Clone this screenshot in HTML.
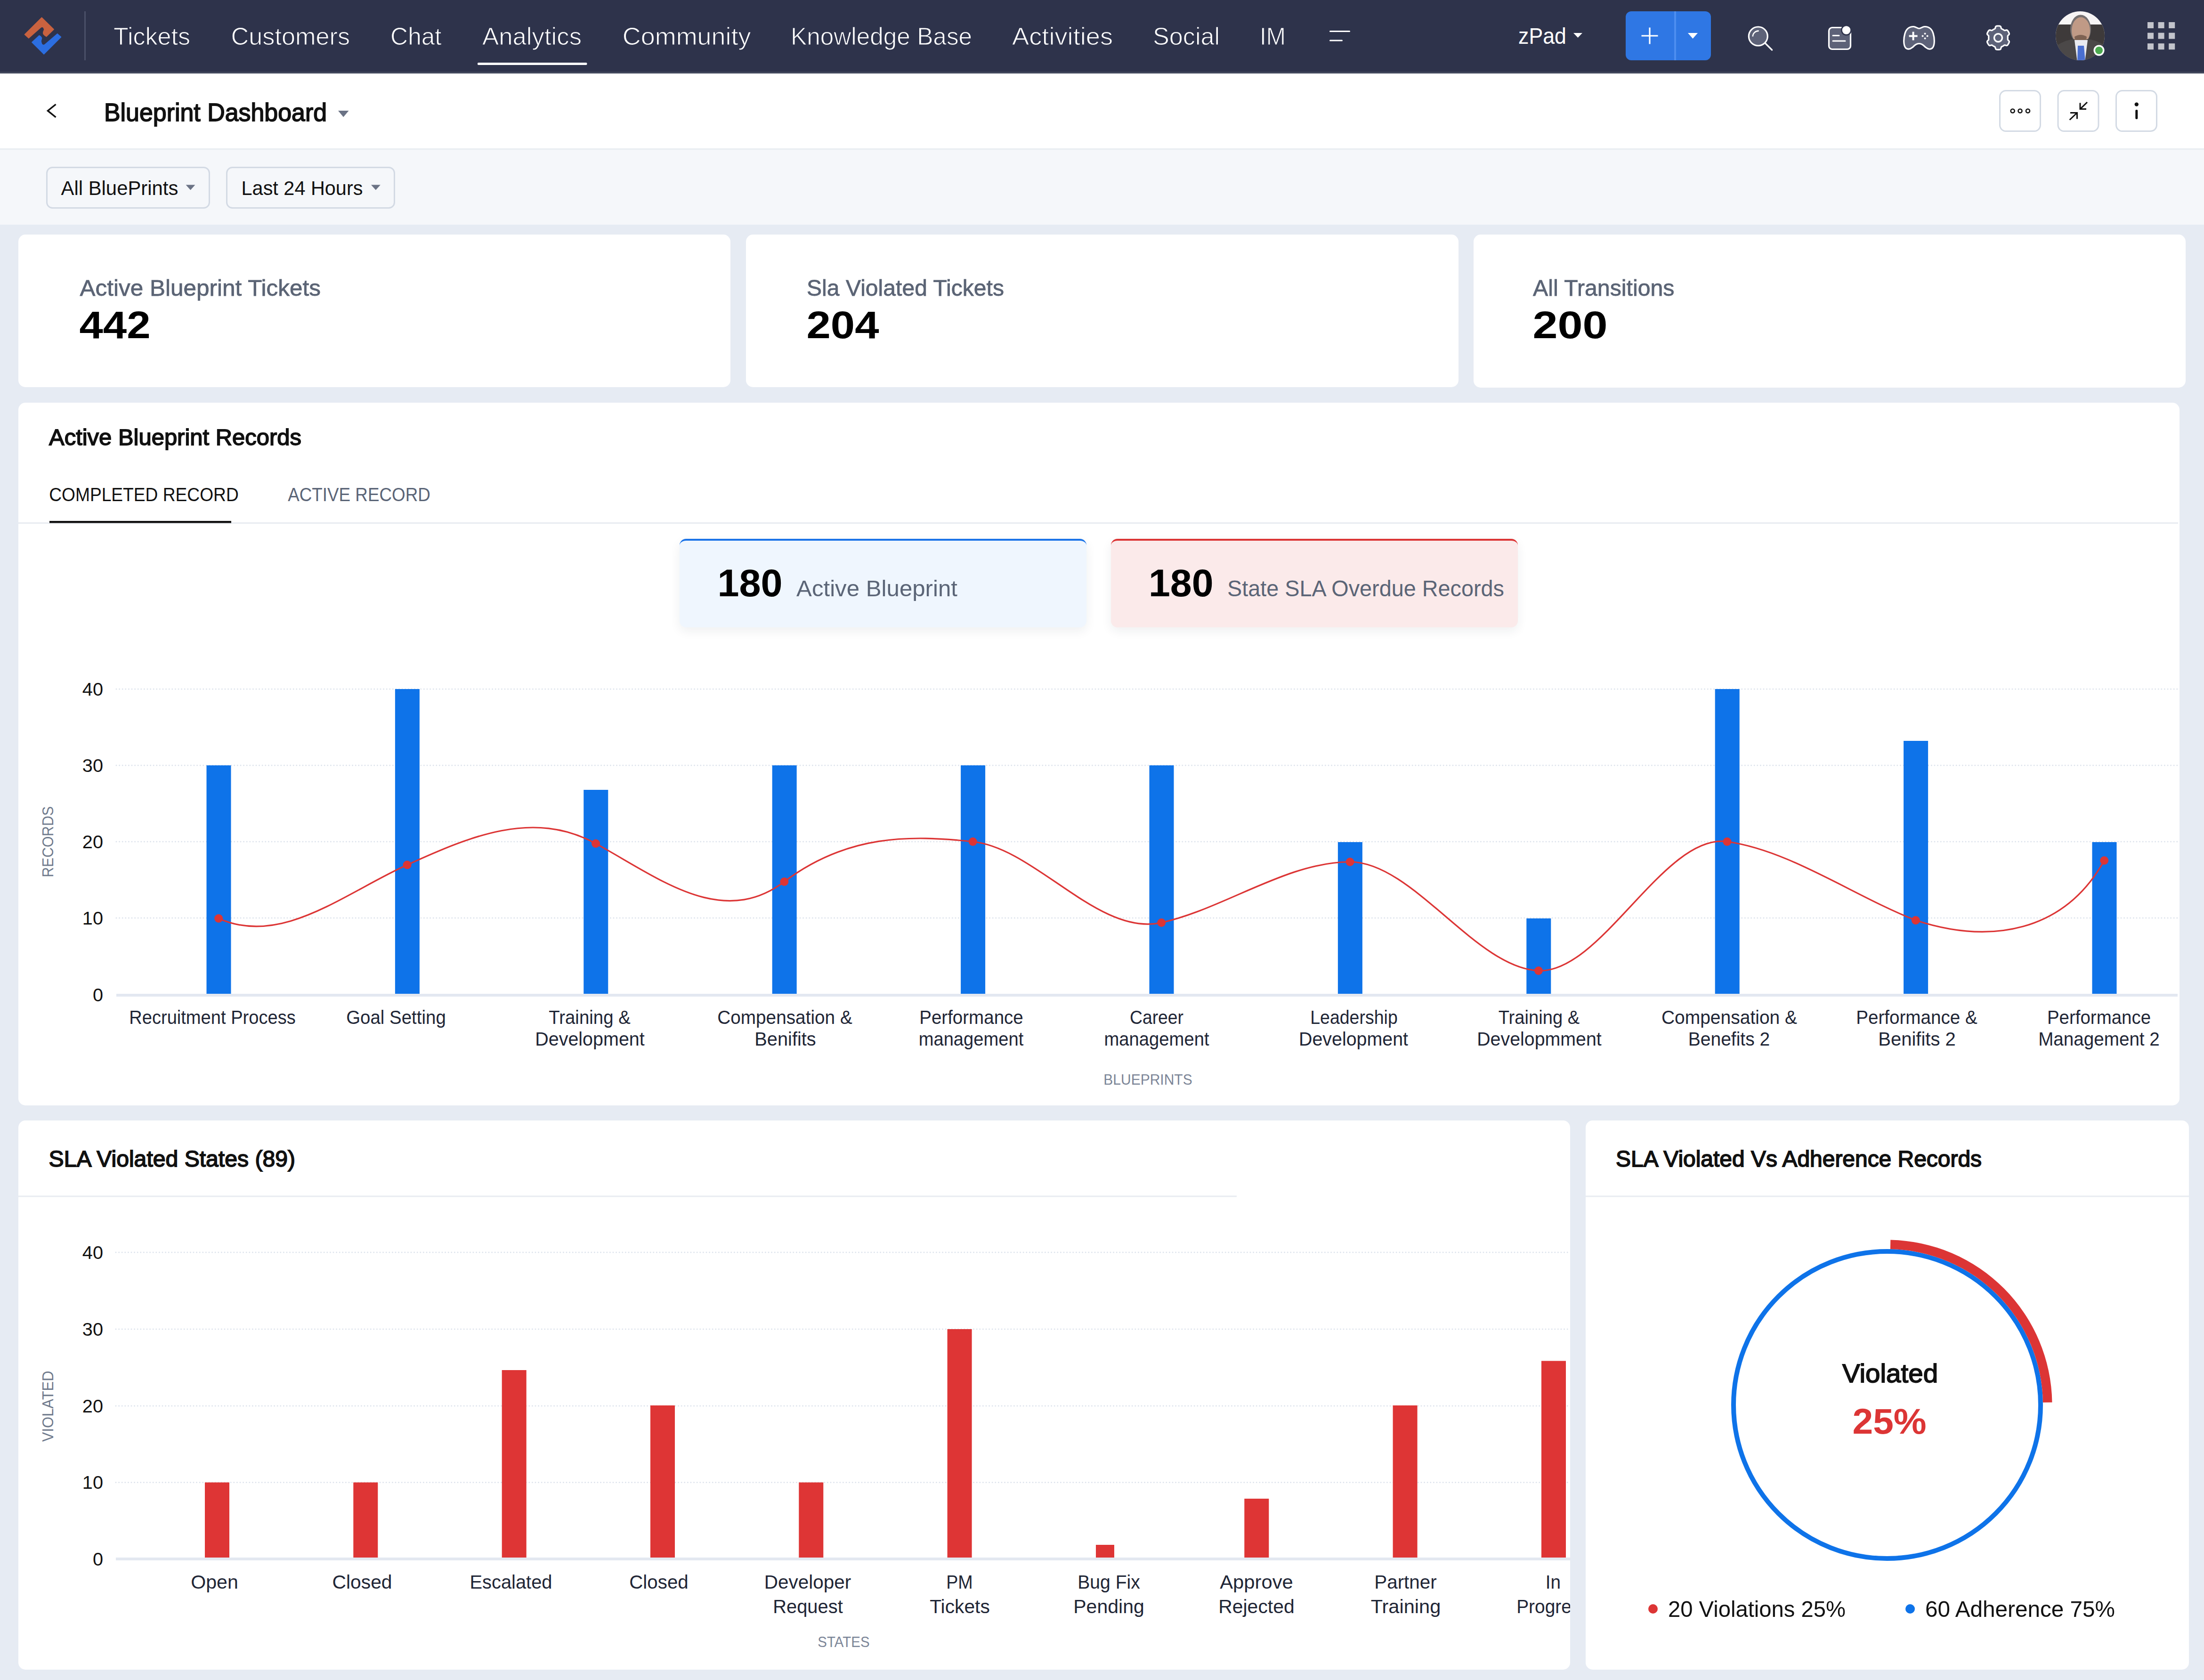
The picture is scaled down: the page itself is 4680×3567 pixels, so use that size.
<!DOCTYPE html>
<html><head><meta charset="utf-8"><title>Blueprint Dashboard</title>
<style>
html,body{margin:0;padding:0;width:4680px;height:3567px;overflow:hidden;background:#e6ebf3;font-family:"Liberation Sans", sans-serif;}
.a{position:absolute;box-sizing:border-box}
.nav{left:0;top:0;width:4680px;height:156px;background:#2e334b}
.hdr{left:0;top:156px;width:4680px;height:162px;background:#fff;border-bottom:3.5px solid #e9edf2}
.flt{left:0;top:318px;width:4680px;height:159px;background:#f5f7fa}
.card{background:#fff;border-radius:15px}
.kb{border-radius:14px;box-shadow:0 8px 22px rgba(30,40,60,0.07)}
svg{position:absolute;left:0;top:0;font-family:"Liberation Sans", sans-serif}
</style></head><body>
<div class="a nav"></div>
<div class="a hdr"></div>
<div class="a flt"></div>
<div class="a card" style="left:39px;top:498px;width:1512px;height:324px"></div>
<div class="a card" style="left:1584px;top:498px;width:1513px;height:324px"></div>
<div class="a card" style="left:3129px;top:498px;width:1512px;height:325px"></div>
<div class="a card" style="left:39px;top:855px;width:4589px;height:1492px"></div>
<div class="a kb" style="left:1443px;top:1144px;width:864px;height:188px;background:#eff6fe;border-top:4px solid #1a73e8"></div>
<div class="a kb" style="left:2359px;top:1144px;width:864px;height:188px;background:#fbeaea;border-top:4px solid #dc3535"></div>
<div class="a card" style="left:39px;top:2379px;width:3295px;height:1166px"></div>
<div class="a card" style="left:3367px;top:2379px;width:1281px;height:1166px"></div>
<svg width="4680" height="3567" viewBox="0 0 4680 3567">
<path d="M52.4 73.2 L88.6 37.4 L114.1 62.4 L98.6 77.5 Q95 76 92.1 72.4 Q91 68 94 63.2 Q93 57 89 57 Q86 58 85.5 59.3 L60.9 81 Z" fill="#c9623f" stroke="#c9623f" stroke-width="1.5" stroke-linejoin="round"/>
<path d="M93.2 114.9 L67.8 89.8 L83.2 75.5 Q87 77 88.6 80.9 Q88 84 87.1 87.1 Q88 95 91.7 95.6 Q94 96 95.6 94.4 L121.8 71.7 L129.5 78.6 Z" fill="#2c6ee0" stroke="#2c6ee0" stroke-width="1.5" stroke-linejoin="round"/>
<rect x="179" y="24" width="3" height="104" fill="#4a5068"/>
<text x="241.0" y="95.0" font-size="51.7" font-weight="400" fill="#ffffff" text-anchor="start" textLength="163.1" lengthAdjust="spacingAndGlyphs" stroke="#2e334b" stroke-width="1.1">Tickets</text>
<text x="490.5" y="95.0" font-size="51.7" font-weight="400" fill="#ffffff" text-anchor="start" textLength="252.6" lengthAdjust="spacingAndGlyphs" stroke="#2e334b" stroke-width="1.1">Customers</text>
<text x="829.0" y="95.0" font-size="51.7" font-weight="400" fill="#ffffff" text-anchor="start" textLength="108.6" lengthAdjust="spacingAndGlyphs" stroke="#2e334b" stroke-width="1.1">Chat</text>
<text x="1024.0" y="95.0" font-size="51.7" font-weight="400" fill="#ffffff" text-anchor="start" textLength="211.1" lengthAdjust="spacingAndGlyphs" stroke="#2e334b" stroke-width="1.1">Analytics</text>
<text x="1321.7" y="95.0" font-size="51.7" font-weight="400" fill="#ffffff" text-anchor="start" textLength="272.9" lengthAdjust="spacingAndGlyphs" stroke="#2e334b" stroke-width="1.1">Community</text>
<text x="1679.0" y="95.0" font-size="51.7" font-weight="400" fill="#ffffff" text-anchor="start" textLength="385.1" lengthAdjust="spacingAndGlyphs" stroke="#2e334b" stroke-width="1.1">Knowledge Base</text>
<text x="2149.0" y="95.0" font-size="51.7" font-weight="400" fill="#ffffff" text-anchor="start" textLength="214.1" lengthAdjust="spacingAndGlyphs" stroke="#2e334b" stroke-width="1.1">Activities</text>
<text x="2448.0" y="95.0" font-size="51.7" font-weight="400" fill="#ffffff" text-anchor="start" textLength="142.1" lengthAdjust="spacingAndGlyphs" stroke="#2e334b" stroke-width="1.1">Social</text>
<text x="2675.0" y="95.0" font-size="51.7" font-weight="400" fill="#ffffff" text-anchor="start" textLength="55.1" lengthAdjust="spacingAndGlyphs" stroke="#2e334b" stroke-width="1.1">IM</text>
<rect x="1014" y="133" width="232.5" height="5" rx="2" fill="#ffffff"/>
<rect x="2823" y="65" width="44" height="3" rx="1.5" fill="#fff"/><rect x="2823" y="84.5" width="28" height="3" rx="1.5" fill="#fff"/>
<text x="3224.0" y="93.0" font-size="48.9" font-weight="400" fill="#ffffff" text-anchor="start" textLength="102.0" lengthAdjust="spacingAndGlyphs">zPad</text>
<polygon points="3341,70 3360,70 3350.5,80" fill="#fff"/>
<rect x="3452" y="24" width="181" height="104" rx="12" fill="#2f77e4"/>
<rect x="3555" y="24" width="4" height="104" fill="#4d8ef0"/>
<rect x="0" y="152.5" width="4680" height="3" fill="#444a5f"/>
<path d="M3485.5 76 H3520.5 M3503 58.5 V93.5" stroke="#fff" stroke-width="3.2"/>
<polygon points="3584,70 3605,70 3594.5,82" fill="#fff"/>
<circle cx="3733.3" cy="77" r="20" fill="#5d6278" stroke="#fff" stroke-width="3.2"/>
<path d="M3721.8 77.6 A12 12 0 0 1 3734.7 65.7" fill="none" stroke="#fff" stroke-width="2.6"/>
<path d="M3748.5 92 L3762.6 106" stroke="#fff" stroke-width="3.2" stroke-linecap="round"/>
<rect x="3883.5" y="58.5" width="46" height="46" rx="7" fill="#5d6278" stroke="#fff" stroke-width="3.2"/>
<circle cx="3920.5" cy="64" r="11.5" fill="#2e334b"/><circle cx="3920.5" cy="64" r="8.8" fill="#fff"/>
<path d="M3892 75.6 H3905 M3892 87 H3918" stroke="#fff" stroke-width="3" stroke-linecap="round"/>
<g transform="translate(4042,55)"><path d="M21 1.5 C12 1.5 6 6 3 16 C0 26 -0.5 40 4 46 C8 51 14 49.5 19 45.5 C24 41 27 37.5 33 37.5 C39 37.5 42 41 47 45.5 C52 49.5 58 51 62 46 C66.5 40 66 26 63 16 C60 6 54 1.5 45 1.5 C40 1.5 37 5.5 33 5.5 C29 5.5 26 1.5 21 1.5 Z" fill="#5d6278" stroke="#fff" stroke-width="3.2"/><path d="M11.6 21.4 H29.6 M20.6 12.4 V30.4" stroke="#fff" stroke-width="4"/><circle cx="45.6" cy="16.4" r="2" fill="#fff"/><circle cx="45.6" cy="26.4" r="2" fill="#fff"/><circle cx="40.6" cy="21.4" r="2" fill="#fff"/><circle cx="50.6" cy="21.4" r="2" fill="#fff"/></g>
<path d="M4243.00 55.00 L4243.66 55.01 L4244.32 55.04 L4244.98 55.09 L4245.63 55.16 L4246.28 55.27 L4246.92 55.44 L4247.54 55.71 L4248.10 56.19 L4248.56 57.03 L4248.89 58.23 L4249.16 59.42 L4249.48 60.27 L4249.87 60.79 L4250.32 61.13 L4250.79 61.39 L4251.27 61.63 L4251.74 61.87 L4252.22 62.11 L4252.69 62.36 L4253.15 62.62 L4253.61 62.89 L4254.06 63.17 L4254.50 63.46 L4254.95 63.76 L4255.39 64.05 L4255.86 64.32 L4256.37 64.54 L4257.02 64.63 L4257.92 64.48 L4259.09 64.11 L4260.28 63.80 L4261.24 63.78 L4261.94 64.02 L4262.48 64.42 L4262.95 64.89 L4263.37 65.40 L4263.76 65.93 L4264.13 66.48 L4264.49 67.03 L4264.82 67.60 L4265.15 68.18 L4265.45 68.76 L4265.74 69.36 L4266.00 69.96 L4266.23 70.58 L4266.41 71.22 L4266.48 71.89 L4266.34 72.62 L4265.85 73.43 L4264.97 74.31 L4264.07 75.14 L4263.50 75.84 L4263.25 76.45 L4263.18 77.00 L4263.18 77.54 L4263.21 78.08 L4263.25 78.61 L4263.28 79.14 L4263.29 79.67 L4263.30 80.20 L4263.29 80.73 L4263.28 81.26 L4263.25 81.79 L4263.21 82.32 L4263.18 82.86 L4263.18 83.40 L4263.25 83.95 L4263.50 84.56 L4264.07 85.26 L4264.97 86.09 L4265.85 86.97 L4266.34 87.78 L4266.48 88.51 L4266.41 89.18 L4266.23 89.82 L4266.00 90.44 L4265.74 91.04 L4265.45 91.64 L4265.15 92.22 L4264.82 92.80 L4264.49 93.37 L4264.13 93.92 L4263.76 94.47 L4263.37 95.00 L4262.95 95.51 L4262.48 95.98 L4261.94 96.38 L4261.24 96.62 L4260.28 96.60 L4259.09 96.29 L4257.92 95.92 L4257.02 95.77 L4256.37 95.86 L4255.86 96.08 L4255.39 96.35 L4254.95 96.64 L4254.50 96.94 L4254.06 97.23 L4253.61 97.51 L4253.15 97.78 L4252.69 98.04 L4252.22 98.29 L4251.74 98.53 L4251.27 98.77 L4250.79 99.01 L4250.32 99.27 L4249.87 99.61 L4249.48 100.13 L4249.16 100.98 L4248.89 102.17 L4248.56 103.37 L4248.10 104.21 L4247.54 104.69 L4246.92 104.96 L4246.28 105.13 L4245.63 105.24 L4244.98 105.31 L4244.32 105.36 L4243.66 105.39 L4243.00 105.40 L4242.34 105.39 L4241.68 105.36 L4241.02 105.31 L4240.37 105.24 L4239.72 105.13 L4239.08 104.96 L4238.46 104.69 L4237.90 104.21 L4237.44 103.37 L4237.11 102.17 L4236.84 100.98 L4236.52 100.13 L4236.13 99.61 L4235.68 99.27 L4235.21 99.01 L4234.73 98.77 L4234.26 98.53 L4233.78 98.29 L4233.31 98.04 L4232.85 97.78 L4232.39 97.51 L4231.94 97.23 L4231.50 96.94 L4231.05 96.64 L4230.61 96.35 L4230.14 96.08 L4229.63 95.86 L4228.98 95.77 L4228.08 95.92 L4226.91 96.29 L4225.72 96.60 L4224.76 96.62 L4224.06 96.38 L4223.52 95.98 L4223.05 95.51 L4222.63 95.00 L4222.24 94.47 L4221.87 93.92 L4221.51 93.37 L4221.18 92.80 L4220.85 92.22 L4220.55 91.64 L4220.26 91.04 L4220.00 90.44 L4219.77 89.82 L4219.59 89.18 L4219.52 88.51 L4219.66 87.78 L4220.15 86.97 L4221.03 86.09 L4221.93 85.26 L4222.50 84.56 L4222.75 83.95 L4222.82 83.40 L4222.82 82.86 L4222.79 82.32 L4222.75 81.79 L4222.72 81.26 L4222.71 80.73 L4222.70 80.20 L4222.71 79.67 L4222.72 79.14 L4222.75 78.61 L4222.79 78.08 L4222.82 77.54 L4222.82 77.00 L4222.75 76.45 L4222.50 75.84 L4221.93 75.14 L4221.03 74.31 L4220.15 73.43 L4219.66 72.62 L4219.52 71.89 L4219.59 71.22 L4219.77 70.58 L4220.00 69.96 L4220.26 69.36 L4220.55 68.76 L4220.85 68.18 L4221.18 67.60 L4221.51 67.03 L4221.87 66.48 L4222.24 65.93 L4222.63 65.40 L4223.05 64.89 L4223.52 64.42 L4224.06 64.02 L4224.76 63.78 L4225.72 63.80 L4226.91 64.11 L4228.08 64.48 L4228.98 64.63 L4229.63 64.54 L4230.14 64.32 L4230.61 64.05 L4231.05 63.76 L4231.50 63.46 L4231.94 63.17 L4232.39 62.89 L4232.85 62.62 L4233.31 62.36 L4233.78 62.11 L4234.26 61.87 L4234.73 61.63 L4235.21 61.39 L4235.68 61.13 L4236.13 60.79 L4236.52 60.27 L4236.84 59.42 L4237.11 58.23 L4237.44 57.03 L4237.90 56.19 L4238.46 55.71 L4239.08 55.44 L4239.72 55.27 L4240.37 55.16 L4241.02 55.09 L4241.68 55.04 L4242.34 55.01 Z" fill="#5d6278" stroke="#fff" stroke-width="3.2" stroke-linejoin="round"/>
<circle cx="4243" cy="80.2" r="8.5" fill="none" stroke="#fff" stroke-width="3.5"/>
<defs><clipPath id="av"><circle cx="4417" cy="76" r="52"/></clipPath><clipPath id="c2"><rect x="39" y="2379" width="3295" height="1166"/></clipPath></defs>
<g clip-path="url(#av)"><rect x="4360" y="20" width="114" height="112" fill="#f7f5f5"/><path d="M4360 132 V58 Q4362 52 4375 52 H4460 Q4472 52 4474 58 V132Z" fill="#3e3a3a"/><ellipse cx="4418" cy="62" rx="22" ry="30.5" fill="#757070"/><ellipse cx="4418.5" cy="65" rx="19.5" ry="28.5" fill="#c09a86"/><path d="M4405 78 Q4418 70 4431 78 Q4430 92 4418 94 Q4406 92 4405 78Z" fill="#7e6253"/><path d="M4360 132 L4368 96 Q4388 84 4405 83 L4418 112 L4431 83 Q4450 84 4468 96 L4474 132Z" fill="#4b4848"/><path d="M4405 85 L4433 85 L4427 132 L4411 132Z" fill="#e9eaf0"/><path d="M4412 97 L4425 97 L4428 132 L4411 132Z" fill="#4a6fd0"/></g>
<circle cx="4457" cy="107" r="11.5" fill="#fff"/><circle cx="4457" cy="107" r="8" fill="#4caa4f"/>
<rect x="4560.0" y="47.0" width="13" height="13" fill="#c2c4cb"/>
<rect x="4560.0" y="69.6" width="13" height="13" fill="#c2c4cb"/>
<rect x="4560.0" y="92.2" width="13" height="13" fill="#c2c4cb"/>
<rect x="4582.6" y="47.0" width="13" height="13" fill="#c2c4cb"/>
<rect x="4582.6" y="69.6" width="13" height="13" fill="#c2c4cb"/>
<rect x="4582.6" y="92.2" width="13" height="13" fill="#c2c4cb"/>
<rect x="4605.2" y="47.0" width="13" height="13" fill="#c2c4cb"/>
<rect x="4605.2" y="69.6" width="13" height="13" fill="#c2c4cb"/>
<rect x="4605.2" y="92.2" width="13" height="13" fill="#c2c4cb"/>
<path d="M118.5 221.5 L101.5 235.2 L118.5 249" fill="none" stroke="#111" stroke-width="3.5"/>
<text x="220.9" y="257.0" font-size="53.8" font-weight="400" fill="#111" text-anchor="start" textLength="473.2" lengthAdjust="spacingAndGlyphs" stroke="#111" stroke-width="1.8">Blueprint Dashboard</text>
<polygon points="718,235 740.5,235 729.2,248.6" fill="#6b7385"/>
<rect x="4246.5" y="192.5" width="86" height="86" rx="13" fill="#fff" stroke="#d3dae4" stroke-width="3"/>
<rect x="4370.0" y="192.5" width="86" height="86" rx="13" fill="#fff" stroke="#d3dae4" stroke-width="3"/>
<rect x="4493.5" y="192.5" width="86" height="86" rx="13" fill="#fff" stroke="#d3dae4" stroke-width="3"/>
<circle cx="4273.7" cy="235.5" r="4" fill="none" stroke="#111" stroke-width="2.6"/>
<circle cx="4289.5" cy="235.5" r="4" fill="none" stroke="#111" stroke-width="2.6"/>
<circle cx="4306" cy="235.5" r="4" fill="none" stroke="#111" stroke-width="2.6"/>
<path d="M4394.7 254.5 L4410.5 239.5 M4396 239.5 H4410.5 V252.6 M4432 217 L4417 231.6 M4417 218.4 V231.6 H4430" fill="none" stroke="#111" stroke-width="3"/>
<circle cx="4536.8" cy="221.6" r="4.2" fill="#111"/><rect x="4534.3" y="233" width="5" height="20" rx="2" fill="#111"/>
<rect x="99.5" y="355.5" width="345" height="86" rx="12" fill="none" stroke="#d3dae4" stroke-width="3"/>
<rect x="481.5" y="355.5" width="356" height="86" rx="12" fill="none" stroke="#d3dae4" stroke-width="3"/>
<text x="129.6" y="414.0" font-size="43.3" font-weight="400" fill="#111" text-anchor="start" textLength="248.7" lengthAdjust="spacingAndGlyphs">All BluePrints</text>
<polygon points="394.6,392.6 414.4,392.6 404.5,403.5" fill="#6b7385"/>
<text x="512.6" y="414.0" font-size="43.3" font-weight="400" fill="#111" text-anchor="start" textLength="257.8" lengthAdjust="spacingAndGlyphs">Last 24 Hours</text>
<polygon points="788,392.6 807.8,392.6 797.9,403.5" fill="#6b7385"/>
<text x="169.6" y="628.0" font-size="48.9" font-weight="400" fill="#5b6475" text-anchor="start" textLength="511.4" lengthAdjust="spacingAndGlyphs" stroke="#5b6475" stroke-width="0.8">Active Blueprint Tickets</text>
<text x="168.4" y="718.0" font-size="81.0" font-weight="700" fill="#000" text-anchor="start" textLength="151.2" lengthAdjust="spacingAndGlyphs">442</text>
<text x="1713.0" y="628.0" font-size="48.9" font-weight="400" fill="#5b6475" text-anchor="start" textLength="419.0" lengthAdjust="spacingAndGlyphs" stroke="#5b6475" stroke-width="0.8">Sla Violated Tickets</text>
<text x="1712.4" y="718.0" font-size="81.0" font-weight="700" fill="#000" text-anchor="start" textLength="154.2" lengthAdjust="spacingAndGlyphs">204</text>
<text x="3255.0" y="628.0" font-size="48.9" font-weight="400" fill="#5b6475" text-anchor="start" textLength="300.5" lengthAdjust="spacingAndGlyphs" stroke="#5b6475" stroke-width="0.8">All Transitions</text>
<text x="3254.4" y="718.0" font-size="81.0" font-weight="700" fill="#000" text-anchor="start" textLength="159.2" lengthAdjust="spacingAndGlyphs">200</text>
<text x="104.0" y="945.0" font-size="48.9" font-weight="400" fill="#111" text-anchor="start" textLength="536.0" lengthAdjust="spacingAndGlyphs" stroke="#111" stroke-width="1.8">Active Blueprint Records</text>
<text x="104.2" y="1063.5" font-size="39.8" font-weight="400" fill="#111" text-anchor="start" textLength="402.6" lengthAdjust="spacingAndGlyphs">COMPLETED RECORD</text>
<text x="611.2" y="1063.5" font-size="39.8" font-weight="400" fill="#5b6577" text-anchor="start" textLength="302.6" lengthAdjust="spacingAndGlyphs">ACTIVE RECORD</text>
<rect x="39" y="1109" width="4586" height="3" fill="#e8ecf1"/>
<rect x="105" y="1106" width="386" height="4.5" fill="#111"/>
<text x="1523.4" y="1266.0" font-size="81.0" font-weight="700" fill="#000" text-anchor="start" textLength="138.2" lengthAdjust="spacingAndGlyphs">180</text>
<text x="1691.1" y="1266.0" font-size="47.5" font-weight="400" fill="#5b6577" text-anchor="start" textLength="341.9" lengthAdjust="spacingAndGlyphs">Active Blueprint</text>
<text x="2438.9" y="1266.0" font-size="81.0" font-weight="700" fill="#000" text-anchor="start" textLength="137.7" lengthAdjust="spacingAndGlyphs">180</text>
<text x="2606.1" y="1266.0" font-size="47.5" font-weight="400" fill="#5b6577" text-anchor="start" textLength="587.9" lengthAdjust="spacingAndGlyphs">State SLA Overdue Records</text>
<line x1="247" y1="1463" x2="4624" y2="1463" stroke="#dde3ec" stroke-width="3" stroke-linecap="round" stroke-dasharray="0 6.6"/>
<line x1="247" y1="1625" x2="4624" y2="1625" stroke="#dde3ec" stroke-width="3" stroke-linecap="round" stroke-dasharray="0 6.6"/>
<line x1="247" y1="1787" x2="4624" y2="1787" stroke="#dde3ec" stroke-width="3" stroke-linecap="round" stroke-dasharray="0 6.6"/>
<line x1="247" y1="1949" x2="4624" y2="1949" stroke="#dde3ec" stroke-width="3" stroke-linecap="round" stroke-dasharray="0 6.6"/>
<rect x="247" y="2110" width="4377" height="6" fill="#e3e8f1"/>
<text x="219" y="1476.8" font-size="39.7" fill="#111" text-anchor="end">40</text>
<text x="219" y="1638.8" font-size="39.7" fill="#111" text-anchor="end">30</text>
<text x="219" y="1800.8" font-size="39.7" fill="#111" text-anchor="end">20</text>
<text x="219" y="1962.8" font-size="39.7" fill="#111" text-anchor="end">10</text>
<text x="219" y="2126.3" font-size="39.7" fill="#111" text-anchor="end">0</text>
<rect x="438.5" y="1625" width="52" height="485" fill="#0e73e9"/>
<rect x="838.9" y="1463" width="52" height="647" fill="#0e73e9"/>
<rect x="1239.3" y="1677" width="52" height="433" fill="#0e73e9"/>
<rect x="1639.7" y="1625" width="52" height="485" fill="#0e73e9"/>
<rect x="2040.1" y="1625" width="52" height="485" fill="#0e73e9"/>
<rect x="2440.5" y="1625" width="52" height="485" fill="#0e73e9"/>
<rect x="2840.9" y="1788" width="52" height="322" fill="#0e73e9"/>
<rect x="3241.3" y="1950" width="52" height="160" fill="#0e73e9"/>
<rect x="3641.7" y="1463" width="52" height="647" fill="#0e73e9"/>
<rect x="4042.1" y="1573" width="52" height="537" fill="#0e73e9"/>
<rect x="4442.5" y="1788" width="52" height="322" fill="#0e73e9"/>
<path d="M464.2 1950.0 C597.7 2010.2 731.1 1896.7 864.6 1836.3 C998.1 1775.9 1131.5 1718.2 1265.0 1791.0 C1398.5 1863.8 1531.9 1972.5 1665.4 1872.0 C1798.9 1771.5 1932.3 1772.7 2065.8 1787.0 C2199.3 1801.3 2332.7 1988.7 2466.2 1959.0 C2599.7 1929.3 2733.1 1829.8 2866.6 1830.0 C3000.1 1830.2 3133.5 2055.2 3267.0 2061.0 C3400.5 2066.8 3533.9 1768.5 3667.4 1787.0 C3800.9 1805.5 3934.3 1901.5 4067.8 1954.0 C4227.0 2006.0 4383.4 1979.0 4468.2 1827.0" fill="none" stroke="#dc3535" stroke-width="3.2"/>
<circle cx="464.2" cy="1950" r="9" fill="#dc3535"/>
<circle cx="864.6" cy="1836.3" r="9" fill="#dc3535"/>
<circle cx="1265.0" cy="1791" r="9" fill="#dc3535"/>
<circle cx="1665.4" cy="1872" r="9" fill="#dc3535"/>
<circle cx="2065.8" cy="1787" r="9" fill="#dc3535"/>
<circle cx="2466.2" cy="1959" r="9" fill="#dc3535"/>
<circle cx="2866.6" cy="1830" r="9" fill="#dc3535"/>
<circle cx="3267.0" cy="2061" r="9" fill="#dc3535"/>
<circle cx="3667.4" cy="1787" r="9" fill="#dc3535"/>
<circle cx="4067.8" cy="1954" r="9" fill="#dc3535"/>
<circle cx="4468.2" cy="1827" r="9" fill="#dc3535"/>
<text x="451.0" y="2174.0" font-size="40.1" font-weight="400" fill="#1f2636" text-anchor="middle" textLength="353.6" lengthAdjust="spacingAndGlyphs">Recruitment Process</text>
<text x="841.0" y="2174.0" font-size="40.1" font-weight="400" fill="#1f2636" text-anchor="middle" textLength="211.6" lengthAdjust="spacingAndGlyphs">Goal Setting</text>
<text x="1252.0" y="2174.0" font-size="40.1" font-weight="400" fill="#1f2636" text-anchor="middle" textLength="173.6" lengthAdjust="spacingAndGlyphs">Training &amp;</text>
<text x="1252.5" y="2219.8" font-size="40.1" font-weight="400" fill="#1f2636" text-anchor="middle" textLength="232.6" lengthAdjust="spacingAndGlyphs">Development</text>
<text x="1666.5" y="2174.0" font-size="40.1" font-weight="400" fill="#1f2636" text-anchor="middle" textLength="286.6" lengthAdjust="spacingAndGlyphs">Compensation &amp;</text>
<text x="1667.5" y="2219.8" font-size="40.1" font-weight="400" fill="#1f2636" text-anchor="middle" textLength="130.6" lengthAdjust="spacingAndGlyphs">Benifits</text>
<text x="2062.5" y="2174.0" font-size="40.1" font-weight="400" fill="#1f2636" text-anchor="middle" textLength="220.6" lengthAdjust="spacingAndGlyphs">Performance</text>
<text x="2062.0" y="2219.8" font-size="40.1" font-weight="400" fill="#1f2636" text-anchor="middle" textLength="222.6" lengthAdjust="spacingAndGlyphs">management</text>
<text x="2456.0" y="2174.0" font-size="40.1" font-weight="400" fill="#1f2636" text-anchor="middle" textLength="114.1" lengthAdjust="spacingAndGlyphs">Career</text>
<text x="2456.0" y="2219.8" font-size="40.1" font-weight="400" fill="#1f2636" text-anchor="middle" textLength="223.0" lengthAdjust="spacingAndGlyphs">management</text>
<text x="2875.0" y="2174.0" font-size="40.1" font-weight="400" fill="#1f2636" text-anchor="middle" textLength="185.6" lengthAdjust="spacingAndGlyphs">Leadership</text>
<text x="2874.0" y="2219.8" font-size="40.1" font-weight="400" fill="#1f2636" text-anchor="middle" textLength="232.1" lengthAdjust="spacingAndGlyphs">Development</text>
<text x="3268.0" y="2174.0" font-size="40.1" font-weight="400" fill="#1f2636" text-anchor="middle" textLength="172.6" lengthAdjust="spacingAndGlyphs">Training &amp;</text>
<text x="3268.5" y="2219.8" font-size="40.1" font-weight="400" fill="#1f2636" text-anchor="middle" textLength="264.6" lengthAdjust="spacingAndGlyphs">Developmment</text>
<text x="3672.0" y="2174.0" font-size="40.1" font-weight="400" fill="#1f2636" text-anchor="middle" textLength="288.2" lengthAdjust="spacingAndGlyphs">Compensation &amp;</text>
<text x="3671.5" y="2219.8" font-size="40.1" font-weight="400" fill="#1f2636" text-anchor="middle" textLength="173.6" lengthAdjust="spacingAndGlyphs">Benefits 2</text>
<text x="4070.0" y="2174.0" font-size="40.1" font-weight="400" fill="#1f2636" text-anchor="middle" textLength="257.6" lengthAdjust="spacingAndGlyphs">Performance &amp;</text>
<text x="4070.5" y="2219.8" font-size="40.1" font-weight="400" fill="#1f2636" text-anchor="middle" textLength="164.6" lengthAdjust="spacingAndGlyphs">Benifits 2</text>
<text x="4457.0" y="2174.0" font-size="40.1" font-weight="400" fill="#1f2636" text-anchor="middle" textLength="220.1" lengthAdjust="spacingAndGlyphs">Performance</text>
<text x="4457.0" y="2219.8" font-size="40.1" font-weight="400" fill="#1f2636" text-anchor="middle" textLength="257.6" lengthAdjust="spacingAndGlyphs">Management 2</text>
<text x="2437.5" y="2303.3" font-size="31.7" font-weight="400" fill="#7b8597" text-anchor="middle" textLength="188.3" lengthAdjust="spacingAndGlyphs">BLUEPRINTS</text>
<g transform="translate(113,1862) rotate(-90)"><text x="-0.7" y="0.0" font-size="33.2" font-weight="400" fill="#6f7a8c" text-anchor="start" textLength="150.7" lengthAdjust="spacingAndGlyphs">RECORDS</text></g>
<text x="103.6" y="2477.0" font-size="47.5" font-weight="400" fill="#111" text-anchor="start" textLength="523.4" lengthAdjust="spacingAndGlyphs" stroke="#111" stroke-width="1.8">SLA Violated States (89)</text>
<rect x="39" y="2538.5" width="2587" height="3" fill="#e8ecf1"/>
<g clip-path="url(#c2)">
<line x1="246" y1="2659" x2="3334" y2="2659" stroke="#dde3ec" stroke-width="3" stroke-linecap="round" stroke-dasharray="0 6.6"/>
<line x1="246" y1="2822" x2="3334" y2="2822" stroke="#dde3ec" stroke-width="3" stroke-linecap="round" stroke-dasharray="0 6.6"/>
<line x1="246" y1="2985" x2="3334" y2="2985" stroke="#dde3ec" stroke-width="3" stroke-linecap="round" stroke-dasharray="0 6.6"/>
<line x1="246" y1="3147.5" x2="3334" y2="3147.5" stroke="#dde3ec" stroke-width="3" stroke-linecap="round" stroke-dasharray="0 6.6"/>
<rect x="246" y="3307" width="3088" height="6" fill="#e3e8f1"/>
<text x="219" y="2672.8" font-size="39.7" fill="#111" text-anchor="end">40</text>
<text x="219" y="2835.8" font-size="39.7" fill="#111" text-anchor="end">30</text>
<text x="219" y="2998.8" font-size="39.7" fill="#111" text-anchor="end">20</text>
<text x="219" y="3161.3" font-size="39.7" fill="#111" text-anchor="end">10</text>
<text x="219" y="3323.8" font-size="39.7" fill="#111" text-anchor="end">0</text>
<rect x="435.0" y="3147.5" width="52" height="159.5" fill="#de3535"/>
<rect x="750.3" y="3147.5" width="52" height="159.5" fill="#de3535"/>
<rect x="1065.7" y="2909" width="52" height="398" fill="#de3535"/>
<rect x="1381.0" y="2984" width="52" height="323" fill="#de3535"/>
<rect x="1696.3" y="3147.5" width="52" height="159.5" fill="#de3535"/>
<rect x="2011.6" y="2822" width="52" height="485" fill="#de3535"/>
<rect x="2327.0" y="3280" width="39" height="27" fill="#de3535"/>
<rect x="2642.3" y="3182" width="52" height="125" fill="#de3535"/>
<rect x="2957.6" y="2984" width="52" height="323" fill="#de3535"/>
<rect x="3273.0" y="2889.5" width="52" height="417.5" fill="#de3535"/>
<text x="455.5" y="3373.0" font-size="40.5" font-weight="400" fill="#1f2636" text-anchor="middle" textLength="100.6" lengthAdjust="spacingAndGlyphs">Open</text>
<text x="769.0" y="3373.0" font-size="40.5" font-weight="400" fill="#1f2636" text-anchor="middle" textLength="127.2" lengthAdjust="spacingAndGlyphs">Closed</text>
<text x="1085.0" y="3373.0" font-size="40.5" font-weight="400" fill="#1f2636" text-anchor="middle" textLength="175.1" lengthAdjust="spacingAndGlyphs">Escalated</text>
<text x="1399.0" y="3373.0" font-size="40.5" font-weight="400" fill="#1f2636" text-anchor="middle" textLength="125.6" lengthAdjust="spacingAndGlyphs">Closed</text>
<text x="1715.0" y="3373.0" font-size="40.5" font-weight="400" fill="#1f2636" text-anchor="middle" textLength="184.6" lengthAdjust="spacingAndGlyphs">Developer</text>
<text x="1715.5" y="3425.0" font-size="40.5" font-weight="400" fill="#1f2636" text-anchor="middle" textLength="148.6" lengthAdjust="spacingAndGlyphs">Request</text>
<text x="2037.5" y="3373.0" font-size="40.5" font-weight="400" fill="#1f2636" text-anchor="middle" textLength="56.6" lengthAdjust="spacingAndGlyphs">PM</text>
<text x="2038.0" y="3425.0" font-size="40.5" font-weight="400" fill="#1f2636" text-anchor="middle" textLength="127.6" lengthAdjust="spacingAndGlyphs">Tickets</text>
<text x="2354.5" y="3373.0" font-size="40.5" font-weight="400" fill="#1f2636" text-anchor="middle" textLength="132.6" lengthAdjust="spacingAndGlyphs">Bug Fix</text>
<text x="2354.5" y="3425.0" font-size="40.5" font-weight="400" fill="#1f2636" text-anchor="middle" textLength="150.6" lengthAdjust="spacingAndGlyphs">Pending</text>
<text x="2668.0" y="3373.0" font-size="40.5" font-weight="400" fill="#1f2636" text-anchor="middle" textLength="155.6" lengthAdjust="spacingAndGlyphs">Approve</text>
<text x="2668.0" y="3425.0" font-size="40.5" font-weight="400" fill="#1f2636" text-anchor="middle" textLength="161.6" lengthAdjust="spacingAndGlyphs">Rejected</text>
<text x="2984.5" y="3373.0" font-size="40.5" font-weight="400" fill="#1f2636" text-anchor="middle" textLength="132.6" lengthAdjust="spacingAndGlyphs">Partner</text>
<text x="2985.0" y="3425.0" font-size="40.5" font-weight="400" fill="#1f2636" text-anchor="middle" textLength="148.6" lengthAdjust="spacingAndGlyphs">Training</text>
<text x="3298.0" y="3373.0" font-size="40.5" font-weight="400" fill="#1f2636" text-anchor="middle" textLength="32.3" lengthAdjust="spacingAndGlyphs">In</text>
<text x="3298.0" y="3425.0" font-size="40.5" font-weight="400" fill="#1f2636" text-anchor="middle" textLength="155.6" lengthAdjust="spacingAndGlyphs">Progress</text>
</g>
<text x="1791.5" y="3497.0" font-size="32.1" font-weight="400" fill="#7b8597" text-anchor="middle" textLength="110.3" lengthAdjust="spacingAndGlyphs">STATES</text>
<g transform="translate(113,3060.5) rotate(-90)"><text x="-0.7" y="0.0" font-size="33.2" font-weight="400" fill="#6f7a8c" text-anchor="start" textLength="150.8" lengthAdjust="spacingAndGlyphs">VIOLATED</text></g>
<text x="3431.1" y="2477.0" font-size="47.5" font-weight="400" fill="#111" text-anchor="start" textLength="776.9" lengthAdjust="spacingAndGlyphs" stroke="#111" stroke-width="1.8">SLA Violated Vs Adherence Records</text>
<rect x="3367" y="2538.5" width="1281" height="3" fill="#e8ecf1"/>
<circle cx="4007" cy="2983" r="326" fill="none" stroke="#0e73e9" stroke-width="10"/>
<path d="M4014.3 2632.6 A350.5 350.5 0 0 1 4357.5 2977.5 L4338.0 2977.8 A331 331 0 0 0 4013.9 2652.1 Z" fill="#dc3535"/>
<text x="3911.9" y="2935.0" font-size="55.9" font-weight="400" fill="#111" text-anchor="start" textLength="203.2" lengthAdjust="spacingAndGlyphs" stroke="#111" stroke-width="1.8">Violated</text>
<text x="3933.5" y="3044.0" font-size="76.8" font-weight="700" fill="#dc3535" text-anchor="start" textLength="157.1" lengthAdjust="spacingAndGlyphs">25%</text>
<circle cx="3510" cy="3416" r="10" fill="#dc3535"/>
<text x="3542.0" y="3433.0" font-size="48.9" font-weight="400" fill="#111" text-anchor="start" textLength="377.0" lengthAdjust="spacingAndGlyphs">20 Violations 25%</text>
<circle cx="4056" cy="3416" r="10" fill="#0e73e9"/>
<text x="4088.0" y="3433.0" font-size="48.9" font-weight="400" fill="#111" text-anchor="start" textLength="403.0" lengthAdjust="spacingAndGlyphs">60 Adherence 75%</text>
</svg>
</body></html>
